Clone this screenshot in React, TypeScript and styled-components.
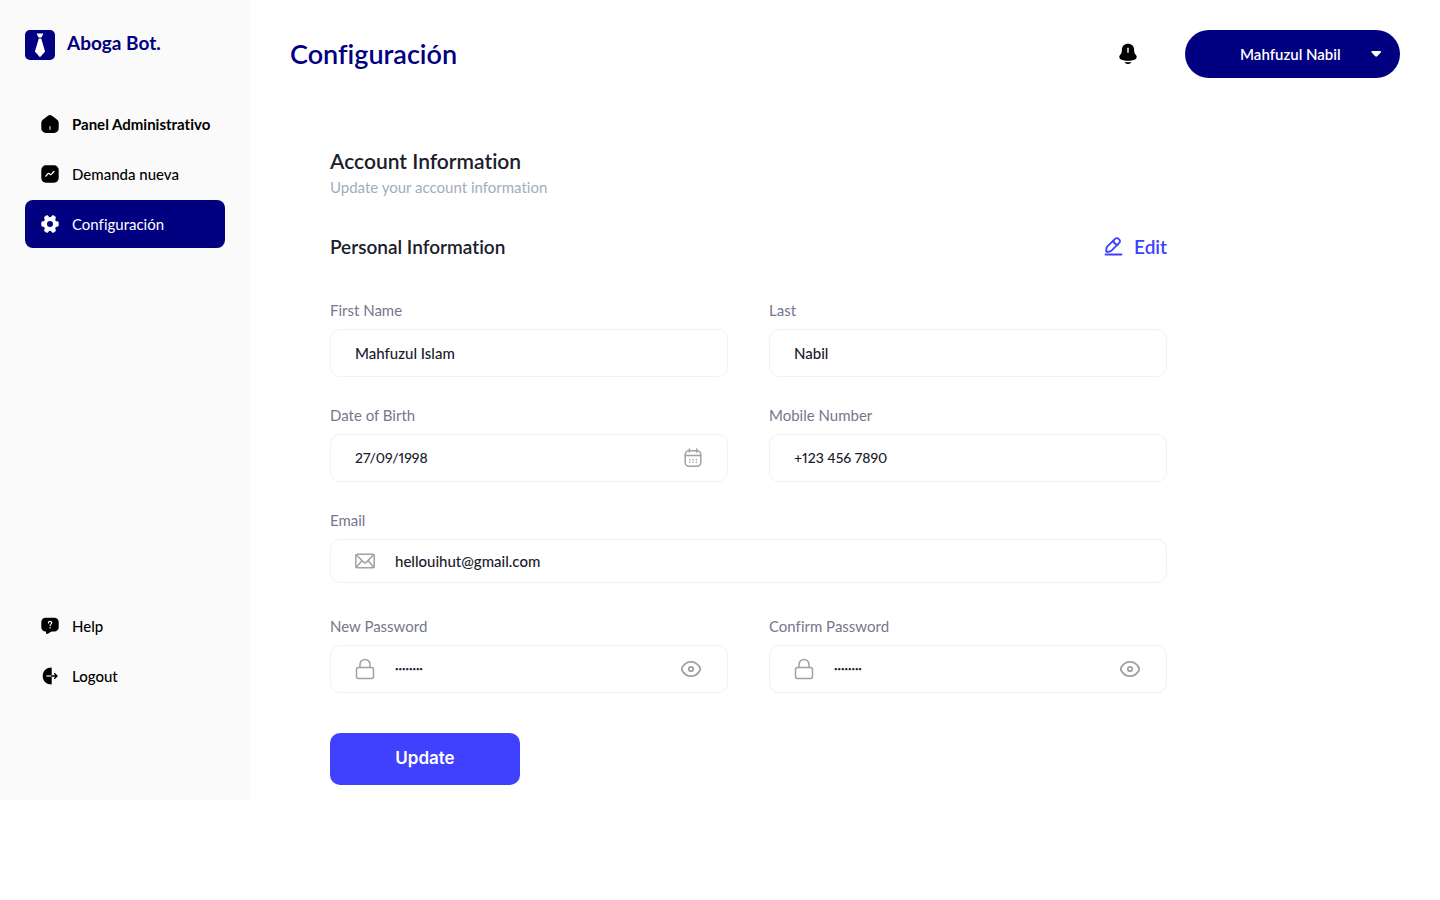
import React, { useId, useState } from "react";
import styled, { createGlobalStyle, css } from "styled-components";

const navy = "#000080";
const accent = "#4040ff";
const ink = "#1a202c";

const GlobalStyle = createGlobalStyle`
  *, *::before, *::after { box-sizing: border-box; }
  body {
    margin: 0;
    background: #fff;
    color: #000;
    font-family: Lato, "Open Sans", sans-serif;
    font-size: 15px;
    font-variant-ligatures: none;
    line-height: 20px;
  }
  button, input { font: inherit; font-variant-ligatures: none; }
`;

const Page = styled.div`
  display: flex;
  align-items: stretch;
`;

const Sidebar = styled.aside`
  display: flex;
  flex-direction: column;
  flex: 0 0 250px;
  padding: 30px 25px 100px;
  background: #fafafa;
`;

const Brand = styled.a`
  display: flex;
  gap: 12px;
  height: 30px;
  margin-bottom: 40px;
  color: ${navy};
  font-size: 19px;
  font-weight: 700;
  line-height: 26px;
  text-decoration: none;
`;

const NavList = styled.nav`
  display: flex;
  flex-direction: column;
  gap: 2px;
`;

const FooterNav = styled(NavList)`
  margin-top: auto;
`;

const NavLink = styled.a<{ $active?: boolean; $strong?: boolean }>`
  display: flex;
  align-items: center;
  gap: 13px;
  height: 48px;
  padding-left: 16px;
  border-radius: 8px;
  color: #000;
  font-weight: ${(p) => (p.$strong ? 700 : 500)};
  text-decoration: none;
  white-space: nowrap;
  ${(p) =>
    p.$active &&
    css`
      background: ${navy};
      color: #fff;
      font-weight: 400;
    `}

  svg {
    flex: none;
  }
`;

const Main = styled.main`
  flex: 1;
  min-width: 0;
  padding: 30px 40px 15px;
`;

const TopBar = styled.header`
  display: flex;
  align-items: center;
  height: 48px;
`;

const PageTitle = styled.h1`
  flex: 1;
  margin: 0;
  color: ${navy};
  font-size: 27px;
  font-weight: 600;
  line-height: 36px;
`;

const IconButton = styled.button`
  display: flex;
  flex: none;
  padding: 0;
  border: 0;
  background: none;
  color: inherit;
  cursor: pointer;
`;

const AccountButton = styled.button`
  display: flex;
  align-items: center;
  justify-content: space-between;
  width: 215px;
  height: 48px;
  margin-left: 47px;
  padding: 0 18px 0 55px;
  border: 0;
  border-radius: 24px;
  background: ${navy};
  color: #fff;
  font-weight: 600;
  cursor: pointer;
`;

const Settings = styled.form`
  max-width: 837px;
  margin: 69px 0 0 40px;
`;

const SectionTitle = styled.h2`
  margin: 0;
  color: ${ink};
  font-size: 21px;
  font-weight: 600;
  line-height: 28px;
`;

const SectionHint = styled.p`
  margin: 0;
  color: #a0aec0;
  line-height: 24px;
`;

const SubHeader = styled.div`
  display: flex;
  align-items: center;
  justify-content: space-between;
  height: 28px;
  margin: 34px 0 39px;
`;

const SubTitle = styled.h3`
  margin: 0;
  color: ${ink};
  font-size: 19px;
  font-weight: 600;
  line-height: 28px;
`;

const EditButton = styled(IconButton)`
  align-items: center;
  gap: 10px;
  color: ${accent};
  font-size: 19px;
  font-weight: 600;
`;

const FieldGrid = styled.div`
  display: grid;
  grid-template-columns: 1fr 1fr;
  gap: 28px 41px;
`;

const PasswordGrid = styled(FieldGrid)`
  margin: 33px 0 40px;
`;

const FieldBlock = styled.div<{ $wide?: boolean }>`
  display: flex;
  flex-direction: column;
  gap: 9px;
  min-width: 0;
  ${(p) => p.$wide && "grid-column: 1 / -1;"}
`;

const FieldLabel = styled.label`
  color: #78758e;
`;

const FieldBox = styled.div<{ $compact?: boolean }>`
  display: flex;
  align-items: center;
  height: ${(p) => (p.$compact ? 44 : 48)}px;
  padding: 0 24px;
  border: 1px solid #f2f2f2;
  border-radius: 10px;
  color: #a0a0a6;
`;

const LeadIcon = styled.span`
  display: flex;
  flex: none;
  margin-right: 20px;
`;

const TextInput = styled.input<{ $numeric?: boolean }>`
  flex: 1;
  min-width: 0;
  padding: 0;
  border: 0;
  outline: 0;
  background: none;
  color: ${ink};
  font-size: ${(p) => (p.$numeric ? 14 : 15)}px;
  font-weight: 500;
  font-variant-numeric: proportional-nums;

  &[type="password"] {
    font-size: 6px;
  }
`;

const SubmitButton = styled.button`
  width: 190px;
  height: 52px;
  padding: 0 0 2px;
  border: 0;
  border-radius: 10px;
  background: ${accent};
  color: #fff;
  font-family: Inter, sans-serif;
  font-size: 17px;
  font-weight: 600;
  cursor: pointer;
`;

const LogoMark = () => (
  <svg width="30" height="30" viewBox="0 0 30 30" aria-hidden="true">
    <rect width="30" height="30" rx="5" fill={navy} />
    <path d="M11.6 3.4h6.8l-1.9 4.2h-3z" fill="#fff" />
    <path d="M13.800 8.400h2.400l3.900 13L15 27.200l-5.100-5.800z" fill="#fff" />
  </svg>
);

const HomeIcon = () => (
  <svg width="18" height="18" viewBox="0 0 18 18" aria-hidden="true">
    <path
      d="M7 .8a3.200 3.200 0 0 1 4 0l4.900 3.600A4.200 4.200 0 0 1 17.700 7.900v5.500a4.500 4.500 0 0 1-4.500 4.500H4.800a4.500 4.500 0 0 1-4.500-4.500V7.900a4.200 4.200 0 0 1 1.800-3.500z"
      fill="currentColor"
    />
    <path d="M9 11.700v2.600" stroke="#c4c4c4" strokeWidth="1.300" strokeLinecap="round" />
  </svg>
);

const ChartIcon = () => (
  <svg width="18" height="18" viewBox="0 0 18 18" fill="none" aria-hidden="true">
    <rect x=".3" y=".3" width="17.400" height="17.400" rx="4.600" fill="currentColor" />
    <path
      d="M4.900 11.200l1.900-2.400c.4-.5.900-.6 1.400-.2l1 .8c.5.400 1 .3 1.400-.2l2.300-2.700"
      stroke="#fff"
      strokeWidth="1.300"
      strokeLinecap="round"
      strokeLinejoin="round"
    />
  </svg>
);

const GearIcon = () => (
  <svg width="18" height="18" viewBox="0 0 18 18" aria-hidden="true">
    <path
      fillRule="evenodd"
      d="M9 2.200c.7 0 1.200-.3 1.500-.9.600-1 1.400-1.300 2.400-.7l1 .6c1 .6 1.200 1.500.6 2.500-.3.600-.3 1.200 0 1.700s.8.900 1.500.9c1.100 0 1.700.6 1.700 1.700v2c0 1.100-.6 1.700-1.700 1.700-.7 0-1.200.3-1.500.9s-.3 1.100 0 1.700c.6 1 .4 1.900-.6 2.500l-1 .6c-1 .6-1.800.3-2.400-.7-.3-.6-.8-.9-1.500-.9s-1.200.3-1.500.9c-.6 1-1.400 1.300-2.400.7l-1-.6c-1-.6-1.200-1.500-.6-2.500.3-.6.3-1.200 0-1.700s-.8-.9-1.500-.9C.900 11.700.3 11.100.3 10V8C.3 6.900.9 6.300 2 6.300c.7 0 1.200-.3 1.500-.9s.3-1.100 0-1.700c-.6-1-.4-1.900.6-2.500l1-.6c1-.6 1.800-.3 2.400.7.300.6.800.9 1.500.9zM9 6a3 3 0 1 0 0 6 3 3 0 0 0 0-6z"
      fill="currentColor"
    />
  </svg>
);

const HelpIcon = () => (
  <svg width="18" height="18" viewBox="0 0 18 18" fill="none" aria-hidden="true">
    <path
      d="M4.600.8h8.800a4.300 4.300 0 0 1 4.300 4.300v5.200a4.300 4.300 0 0 1-4.300 4.300h-2.800L6.300 16.900c-.7.400-1.200.1-1.200-.6v-1.700h-.5A4.300 4.300 0 0 1 .3 10.300V5.100A4.300 4.300 0 0 1 4.600.8z"
      fill="currentColor"
    />
    <path
      d="M7.400 5.900c0-2 3.300-2 3.300 0 0 1.200-1.600 1.300-1.600 2.700"
      stroke="#fff"
      strokeWidth="1.200"
      strokeLinecap="round"
    />
    <circle cx="9.100" cy="10.700" r=".75" fill="#fff" />
  </svg>
);

const LogoutIcon = () => (
  <svg width="18" height="18" viewBox="0 0 18 18" fill="none" aria-hidden="true">
    <path d="M10.700.5v17c-5.200 0-9-3.400-9-8.500s3.800-8.500 9-8.500z" fill="currentColor" />
    <path d="M5.800 9h4.900" stroke="#c4c4c4" strokeWidth="1.300" strokeLinecap="round" />
    <path
      d="M10.700 9h5M13.700 6.700L16 9l-2.300 2.300"
      stroke="currentColor"
      strokeWidth="1.400"
      strokeLinecap="round"
      strokeLinejoin="round"
    />
  </svg>
);

const BellIcon = () => (
  <svg width="20" height="22" viewBox="0 0 20 22" fill="none" aria-hidden="true">
    <path
      d="M10 .8c3.600 0 6 2.400 6.100 5.700.1 2.600.2 3.800 1.700 5.300 1.500 1.600 1.200 3.800-.7 4.600-4.100 1.700-10.100 1.700-14.200 0-1.900-.8-2.200-3-.7-4.600 1.500-1.500 1.600-2.700 1.700-5.300C4 3.200 6.400.8 10 .8z"
      fill="currentColor"
    />
    <path d="M6.500 19c2.200.4 4.800.4 7 0-.8 1.400-2 2-3.500 2s-2.700-.6-3.500-2z" fill="currentColor" />
    <path d="M10 5.300v4" stroke="#fff" strokeWidth="1.400" strokeLinecap="round" />
  </svg>
);

const CaretIcon = () => (
  <svg width="12" height="8" viewBox="0 0 12 8" aria-hidden="true">
    <path d="M2.200 1h8c.9 0 1.200.8.600 1.400L7.200 6.300c-.6.600-1.400.6-2 0L1.600 2.400C1 1.800 1.300 1 2.200 1z" fill="currentColor" />
  </svg>
);

const PencilIcon = () => (
  <svg
    width="20"
    height="20"
    viewBox="0 0 20 20"
    fill="none"
    stroke="currentColor"
    strokeWidth="1.900"
    strokeLinecap="round"
    strokeLinejoin="round"
    aria-hidden="true"
  >
    <path d="M10.800 2.100c1.300-1.400 2.700-1.300 4.100 0s1.500 2.700.1 4.100l-7.500 7.400c-.5.500-1.100.8-1.800.9l-2.300.4c-.9.100-1.300-.3-1.200-1.200l.3-2.500c.1-.7.400-1.300.9-1.800z" />
    <path d="M9.400 3.700c.5 2.300 1.900 3.800 4.300 4.200M1.500 17.500h16" />
  </svg>
);

const CalendarIcon = () => (
  <svg
    width="20"
    height="20"
    viewBox="0 0 20 20"
    fill="none"
    stroke="currentColor"
    strokeWidth="1.500"
    strokeLinecap="round"
    aria-hidden="true"
  >
    <rect x="2.200" y="2.700" width="15.600" height="15.600" rx="3.800" />
    <path d="M2.200 7.500h15.600M6.300 1.100v3M13.700 1.100v3" />
    <path d="M6.700 11.800h.1M10 11.800h.1M13.300 11.800h.1M6.700 14.300h.1M10 14.300h.1M13.300 14.300h.1" />
  </svg>
);

const MailIcon = () => (
  <svg
    width="20"
    height="16"
    viewBox="0 0 20 16"
    fill="none"
    stroke="currentColor"
    strokeWidth="1.500"
    strokeLinecap="round"
    strokeLinejoin="round"
    aria-hidden="true"
  >
    <rect x=".8" y="1.200" width="18.400" height="13.600" rx="1.500" />
    <path d="M1.300 1.700l7.200 7.400c1 1 2 1 3 0l7.200-7.400M1.300 14.300l5.500-6.500M18.700 14.300l-5.500-6.500" />
  </svg>
);

const LockIcon = () => (
  <svg
    width="20"
    height="22"
    viewBox="0 0 20 22"
    fill="none"
    stroke="currentColor"
    strokeWidth="1.500"
    strokeLinecap="round"
    aria-hidden="true"
  >
    <rect x="1.500" y="9.500" width="17" height="11" rx="2" />
    <path d="M5 9.500V6.400a5 5 0 0 1 10 0v3.100" />
  </svg>
);

const EyeIcon = () => (
  <svg width="22" height="18" viewBox="1 0 22 18" fill="none" stroke="currentColor" strokeWidth="1.800" aria-hidden="true">
    <path
      d="M11 1.900c3.600 0 6.600 1.900 8.700 5.400.6 1.100.6 2.300 0 3.400-2.100 3.500-5.100 5.400-8.700 5.400s-6.600-1.900-8.700-5.400c-.6-1.100-.6-2.300 0-3.400C4.400 3.800 7.400 1.900 11 1.900z"
      strokeLinejoin="round"
    />
    <circle cx="11" cy="9" r="2.200" />
  </svg>
);

type FieldProps = {
  label: string;
  value: string;
  type?: string;
  wide?: boolean;
  numeric?: boolean;
  lead?: React.ReactNode;
  trail?: React.ReactNode;
};

function Field({ label, value, type = "text", wide, numeric, lead, trail }: FieldProps) {
  const id = useId();
  return (
    <FieldBlock $wide={wide}>
      <FieldLabel htmlFor={id}>{label}</FieldLabel>
      <FieldBox $compact={wide}>
        {lead && <LeadIcon>{lead}</LeadIcon>}
        <TextInput id={id} type={type} defaultValue={value} $numeric={numeric} />
        {trail}
      </FieldBox>
    </FieldBlock>
  );
}

function PasswordField({ label }: { label: string }) {
  const [visible, setVisible] = useState(false);
  return (
    <Field
      label={label}
      value="password"
      type={visible ? "text" : "password"}
      lead={<LockIcon />}
      trail={
        <IconButton
          type="button"
          aria-label={visible ? "Hide password" : "Show password"}
          onClick={() => setVisible(!visible)}
        >
          <EyeIcon />
        </IconButton>
      }
    />
  );
}

export default function App() {
  return (
    <>
      <GlobalStyle />
      <Page>
        <Sidebar>
          <Brand href="#">
            <LogoMark />
            Aboga Bot.
          </Brand>
          <NavList>
            <NavLink href="#panel" $strong>
              <HomeIcon />
              Panel Administrativo
            </NavLink>
            <NavLink href="#demanda">
              <ChartIcon />
              Demanda nueva
            </NavLink>
            <NavLink href="#configuracion" $active aria-current="page">
              <GearIcon />
              Configuración
            </NavLink>
          </NavList>
          <FooterNav>
            <NavLink href="#help">
              <HelpIcon />
              Help
            </NavLink>
            <NavLink href="#logout">
              <LogoutIcon />
              Logout
            </NavLink>
          </FooterNav>
        </Sidebar>
        <Main>
          <TopBar>
            <PageTitle>Configuración</PageTitle>
            <IconButton type="button" aria-label="Notifications">
              <BellIcon />
            </IconButton>
            <AccountButton type="button" aria-haspopup="menu">
              Mahfuzul Nabil
              <CaretIcon />
            </AccountButton>
          </TopBar>
          <Settings onSubmit={(e) => e.preventDefault()}>
            <SectionTitle>Account Information</SectionTitle>
            <SectionHint>Update your account information</SectionHint>
            <SubHeader>
              <SubTitle>Personal Information</SubTitle>
              <EditButton type="button">
                <PencilIcon />
                Edit
              </EditButton>
            </SubHeader>
            <FieldGrid>
              <Field label="First Name" value="Mahfuzul Islam" />
              <Field label="Last" value="Nabil" />
              <Field
                label="Date of Birth"
                value="27/09/1998"
                numeric
                trail={
                  <IconButton type="button" aria-label="Choose date">
                    <CalendarIcon />
                  </IconButton>
                }
              />
              <Field label="Mobile Number" value="+123 456 7890" type="tel" numeric />
              <Field label="Email" value="hellouihut@gmail.com" type="email" wide lead={<MailIcon />} />
            </FieldGrid>
            <PasswordGrid>
              <PasswordField label="New Password" />
              <PasswordField label="Confirm Password" />
            </PasswordGrid>
            <SubmitButton type="submit">Update</SubmitButton>
          </Settings>
        </Main>
      </Page>
    </>
  );
}
